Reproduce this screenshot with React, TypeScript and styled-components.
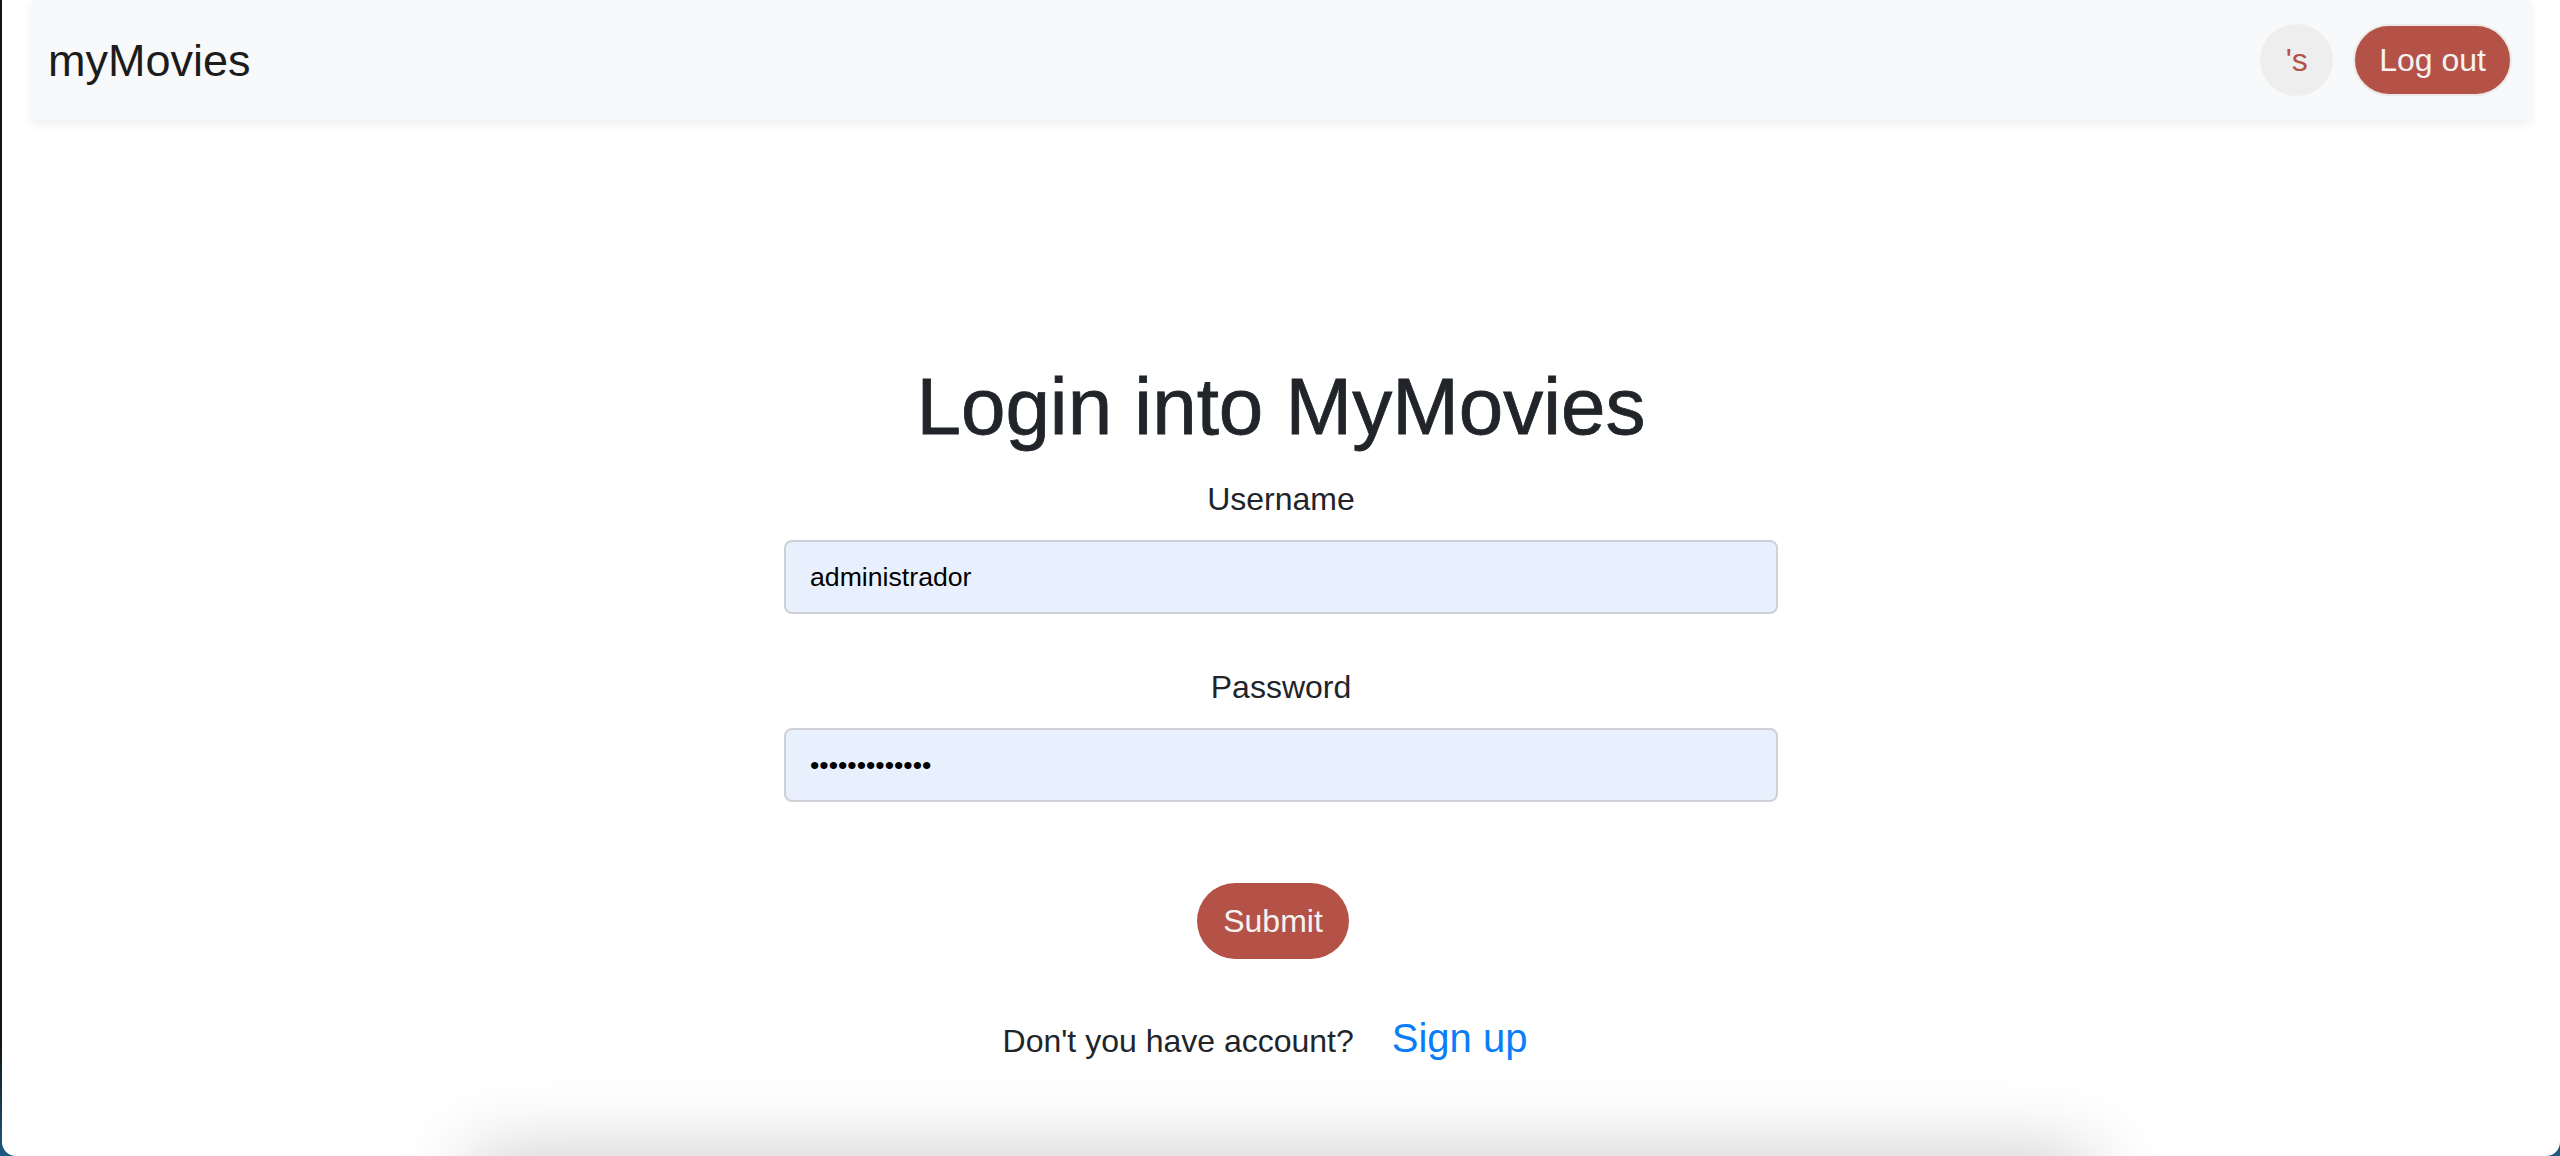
import React from "react";
import styled, { createGlobalStyle } from "styled-components";

const GlobalStyle = createGlobalStyle`
  html, body {
    margin: 0;
    padding: 0;
    overflow: hidden;
  }
  body {
    font-family: "Liberation Sans", Arial, Helvetica, sans-serif;
    background: #121212;
  }
  *, *::before, *::after {
    box-sizing: border-box;
  }
`;

const Frame = styled.div`
  height: 1156px;
  padding-left: 2px;
  background: linear-gradient(to bottom, #121212 0%, #121212 90%, #1d5a82 100%);
`;

const Window = styled.div`
  height: 100%;
  background: #ffffff;
  border-radius: 0 0 14px 14px;
  overflow: hidden;
  display: flex;
  flex-direction: column;
`;

const Navbar = styled.nav`
  flex: 0 0 120px;
  margin: 0 30px;
  padding: 0 18px 0 16px;
  background: #f8f9fa;
  box-shadow: 0 4px 10px rgba(0, 0, 0, 0.07);
  display: flex;
  align-items: center;
  justify-content: space-between;
`;

const Brand = styled.a`
  font-size: 45px;
  line-height: 1;
  color: #1c1c1c;
  text-decoration: none;
`;

const NavActions = styled.div`
  display: flex;
  align-items: center;
  gap: 20px;
`;

const Avatar = styled.div`
  width: 73px;
  height: 72px;
  border-radius: 50%;
  background: #eeeeee;
  color: #b55247;
  font-size: 32px;
  display: flex;
  align-items: center;
  justify-content: center;
`;

const PillButton = styled.button<{ $height: number; $padX: number; $bordered?: boolean; $offset?: number }>`
  height: ${(p) => p.$height}px;
  padding: 0 ${(p) => p.$padX}px;
  margin-right: ${(p) => p.$offset ?? 0}px;
  border-radius: ${(p) => p.$height / 2}px;
  border: ${(p) => (p.$bordered ? "2px solid #ebe9e7" : "none")};
  background: #b55247;
  color: #f4f2f2;
  font-family: "Liberation Sans", Arial, Helvetica, sans-serif;
  font-size: 32px;
  line-height: 1;
  cursor: pointer;
`;

const Main = styled.main`
  flex: 1 0 auto;
  display: flex;
  flex-direction: column;
  align-items: center;
  padding-top: 239px;
`;

const Title = styled.h1`
  margin: 0 0 20px;
  font-size: 80px;
  line-height: 96px;
  font-weight: 400;
  color: #212529;
  -webkit-text-stroke: 0.8px #212529;
`;

const Form = styled.form`
  display: flex;
  flex-direction: column;
  align-items: center;
`;

const Field = styled.div<{ $gapAfter: number }>`
  display: flex;
  flex-direction: column;
  align-items: center;
  margin-bottom: ${(p) => p.$gapAfter}px;
`;

const Label = styled.label`
  font-size: 32px;
  line-height: 48px;
  color: #212529;
  margin-bottom: 17px;
`;

const Input = styled.input`
  width: 994px;
  height: 74px;
  padding: 0 24px;
  border: 2px solid #cdd1d7;
  border-radius: 8px;
  background: #e8f0fe;
  color: #000000;
  font-family: "Liberation Sans", Arial, Helvetica, sans-serif;
  font-size: 26.67px;
  outline: none;
`;

const SignupRow = styled.div`
  margin-top: 49px;
  margin-right: 32px;
  display: flex;
  align-items: baseline;
  gap: 38px;
`;

const SignupText = styled.span`
  font-size: 32px;
  line-height: 48px;
  color: #212529;
`;

const SignupLink = styled.a`
  font-size: 40px;
  line-height: 60px;
  color: #0a7ef8;
  text-decoration: none;
`;

const FooterEdge = styled.footer`
  flex: 0 0 200px;
  margin-bottom: -200px;
  width: 1620px;
  align-self: center;
  background: #ffffff;
  box-shadow: 0 0 80px rgba(0, 0, 0, 0.22);
`;

export default function App() {
  return (
    <>
      <GlobalStyle />
      <Frame>
        <Window>
          <Navbar>
            <Brand href="#">myMovies</Brand>
            <NavActions>
              <Avatar>'s</Avatar>
              <PillButton type="button" $height={72} $padX={24} $bordered>
                Log out
              </PillButton>
            </NavActions>
          </Navbar>
          <Main>
            <Title>Login into MyMovies</Title>
            <Form onSubmit={(e) => e.preventDefault()}>
              <Field $gapAfter={49}>
                <Label htmlFor="username">Username</Label>
                <Input id="username" type="text" defaultValue="administrador" readOnly />
              </Field>
              <Field $gapAfter={81}>
                <Label htmlFor="password">Password</Label>
                <Input id="password" type="password" defaultValue="administrador" readOnly />
              </Field>
              <PillButton type="submit" $height={76} $padX={26} $offset={16}>
                Submit
              </PillButton>
            </Form>
            <SignupRow>
              <SignupText>Don't you have account?</SignupText>
              <SignupLink href="#">Sign up</SignupLink>
            </SignupRow>
          </Main>
          <FooterEdge />
        </Window>
      </Frame>
    </>
  );
}
